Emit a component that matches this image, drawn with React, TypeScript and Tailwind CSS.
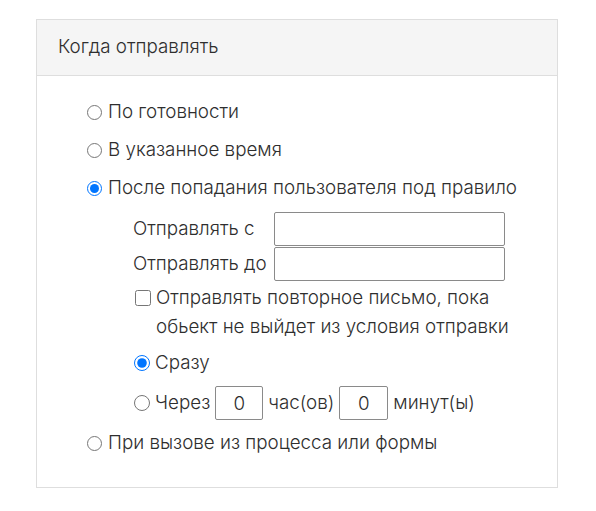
import { FC, useState } from "react";

const font = { fontFamily: "Inter, 'Noto Sans', sans-serif" };

const App: FC = () => {
  const [mode, setMode] = useState("rule");
  const [delay, setDelay] = useState("now");
  const [repeat, setRepeat] = useState(false);

  return (
    <div className="min-h-[511px] w-[596px] bg-white pl-[36px] pt-[19px] text-[18.8px] font-light text-[#2e2e2e]" style={font}>
      <div className="w-[522px] border border-[#dedede]">
        {/* Header */}
        <div className="flex h-[56px] items-center border-b border-[#dedede] bg-[#f5f5f5] px-[21px]">
          Когда отправлять
        </div>

        {/* Body */}
        <div className="pb-[25px] pl-[50px] pt-[17px]">
          <label className="flex h-[38px] items-center">
            <input
              type="radio"
              name="mode"
              className="m-0 mr-[6px] h-[15px] w-[15px]"
              checked={mode === "ready"}
              onChange={() => setMode("ready")}
            />
            По готовности
          </label>
          <label className="flex h-[38px] items-center">
            <input
              type="radio"
              name="mode"
              className="m-0 mr-[6px] h-[15px] w-[15px]"
              checked={mode === "time"}
              onChange={() => setMode("time")}
            />
            В указанное время
          </label>
          <label className="flex h-[38px] items-center">
            <input
              type="radio"
              name="mode"
              className="m-0 mr-[6px] h-[15px] w-[15px]"
              checked={mode === "rule"}
              onChange={() => setMode("rule")}
            />
            После попадания пользователя под правило
          </label>

          {/* Rule options */}
          <div className="pl-[46px] pt-[5px]">
            <div className="flex h-[34px] items-center">
              <span className="w-[141px]">Отправлять с</span>
              <input type="text" className="h-[34px] w-[231px] rounded-[2px] border border-[#8a8a8a] px-2 outline-none" />
            </div>
            <div className="mt-[1px] flex h-[34px] items-center">
              <span className="w-[141px]">Отправлять до</span>
              <input type="text" className="h-[34px] w-[231px] rounded-[2px] border border-[#8a8a8a] px-2 outline-none" />
            </div>

            <label className="mt-[2px] flex items-start leading-[29px]">
              <input
                type="checkbox"
                className="m-0 ml-[2px] mr-[5px] mt-[7px] h-[16px] w-[16px] shrink-0"
                checked={repeat}
                onChange={(e) => setRepeat(e.target.checked)}
              />
              <span className="w-[360px]">Отправлять повторное письмо, пока обьект не выйдет из условия отправки</span>
            </label>

            <label className="mt-[3px] flex h-[38px] items-center">
              <input
                type="radio"
                name="delay"
                className="m-0 ml-[1px] mr-[5px] h-[16px] w-[16px]"
                checked={delay === "now"}
                onChange={() => setDelay("now")}
              />
              Сразу
            </label>
            <div className="mt-[2px] flex h-[38px] items-center">
              <input
                type="radio"
                name="delay"
                className="m-0 ml-[1px] mr-[5px] h-[16px] w-[16px]"
                checked={delay === "after"}
                onChange={() => setDelay("after")}
              />
              <span>Через</span>
              <input
                type="text"
                defaultValue="0"
                className="mx-[5px] h-[34px] w-[48px] rounded-[2px] border border-[#8a8a8a] text-center outline-none"
              />
              <span>час(ов)</span>
              <input
                type="text"
                defaultValue="0"
                className="mx-[5px] h-[34px] w-[49px] rounded-[2px] border border-[#8a8a8a] text-center outline-none"
              />
              <span>минут(ы)</span>
            </div>
          </div>

          <label className="mt-[2px] flex h-[38px] items-center">
            <input
              type="radio"
              name="mode"
              className="m-0 mr-[6px] h-[15px] w-[15px]"
              checked={mode === "call"}
              onChange={() => setMode("call")}
            />
            При вызове из процесса или формы
          </label>
        </div>
      </div>
    </div>
  );
};

export default App;
